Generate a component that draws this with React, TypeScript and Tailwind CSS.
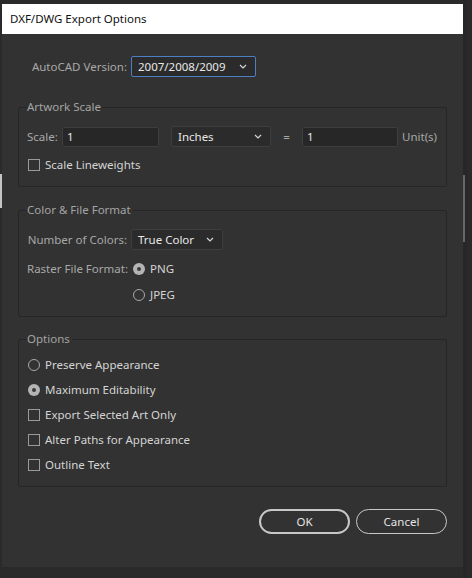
import { ReactNode } from "react";
import clsx from "clsx";

function Chevron() {
  return (
    <svg width="8" height="5" viewBox="0 0 8 5" className="shrink-0">
      <path d="M1 1l3 3 3-3" fill="none" stroke="#d6d6d6" strokeWidth="1.2" />
    </svg>
  );
}

function Select({ value, className, focused }: { value: string; className: string; focused?: boolean }) {
  return (
    <div
      className={clsx(
        "flex h-[21px] items-center justify-between rounded-[2px] border bg-[#2b2b2b] pl-[6px] pr-[8px] text-[#e8e8e8]",
        focused ? "border-[#4b80c4]" : "border-[#3e3e3e]",
        className
      )}
    >
      <span>{value}</span>
      <Chevron />
    </div>
  );
}

function TextInput({ value, className }: { value: string; className: string }) {
  return (
    <div className={clsx("flex h-[20px] items-center rounded-[2px] border border-[#3e3e3e] bg-[#272727] pl-[4px] text-[#e8e8e8]", className)}>
      {value}
    </div>
  );
}

function Checkbox({ label }: { label: string }) {
  return (
    <div className="flex h-[16px] items-center">
      <span className="ml-[1px] h-[12px] w-[12px] border border-[#9a9a9a]" />
      <span className="ml-[5px] text-[#d4d4d4]">{label}</span>
    </div>
  );
}

function Radio({ label, checked, className }: { label: string; checked?: boolean; className?: string }) {
  return (
    <div className={clsx("flex h-[16px] items-center", className)}>
      {checked ? (
        <span className="ml-[1px] flex h-[12px] w-[12px] items-center justify-center rounded-full bg-[#b4b4b4]">
          <span className="h-[4px] w-[4px] rounded-full bg-[#3a3a3a]" />
        </span>
      ) : (
        <span className="ml-[1px] h-[12px] w-[12px] rounded-full border border-[#a8a8a8]" />
      )}
      <span className="ml-[5px] text-[#d4d4d4]">{label}</span>
    </div>
  );
}

function Group({ title, className, children }: { title: string; className: string; children: ReactNode }) {
  return (
    <fieldset className={clsx("rounded-[2px] border border-[#262626] px-[8px] pb-[13px]", className)}>
      <legend className="pr-[2px] leading-[16px] text-[#a4a4a4]">{title}</legend>
      {children}
    </fieldset>
  );
}

export default function App() {
  return (
    <div className="relative h-[578px] w-[472px] overflow-hidden whitespace-nowrap bg-[#2a2a2a] font-['Noto_Sans','Liberation_Sans',sans-serif] text-[11.5px] leading-[16px]">
      <div className="ml-[2px] mt-[4px] flex h-[563px] w-[461px] flex-col bg-[#323232]">
        {/* Title */}
        <div className="flex h-[30px] items-center bg-white pl-[8px] text-[11.5px] text-[#111]">DXF/DWG Export Options</div>

        <div className="flex flex-col px-4">
          {/* Version */}
          <div className="mt-[22px] flex items-center">
            <span className="mr-[4px] w-[109px] text-right text-[#a8a8a8]">AutoCAD Version:</span>
            <Select value="2007/2008/2009" className="w-[125px]" focused />
          </div>

          {/* Artwork Scale */}
          <Group title="Artwork Scale" className="mt-[22px]">
            <div className="mt-[11px] flex items-center">
              <span className="w-[35px] text-[#a8a8a8]">Scale:</span>
              <TextInput value="1" className="w-[97px]" />
              <Select value="Inches" className="ml-[12px] h-[20px] w-[100px]" />
              <span className="w-[31px] text-center text-[#a8a8a8]">=</span>
              <TextInput value="1" className="w-[96px]" />
              <span className="ml-[4px] text-[#a8a8a8]">Unit(s)</span>
            </div>
            <div className="mt-[10px]">
              <Checkbox label="Scale Lineweights" />
            </div>
          </Group>

          {/* Color & File Format */}
          <Group title="Color & File Format" className="mt-[15px]">
            <div className="mt-[11px] flex items-center">
              <span className="mr-[4px] w-[100px] text-right text-[#a8a8a8]">Number of Colors:</span>
              <Select value="True Color" className="h-[20px] w-[92px]" />
            </div>
            <div className="mt-[11px] flex items-center">
              <span className="mr-[4px] w-[100px] text-right text-[#a8a8a8]">Raster File Format:</span>
              <Radio label="PNG" checked className="ml-[1px]" />
            </div>
            <div className="mt-[10px] flex items-center">
              <span className="mr-[4px] w-[100px]" />
              <Radio label="JPEG" className="ml-[1px]" />
            </div>
          </Group>

          {/* Options */}
          <Group title="Options" className="mt-[14px]">
            <div className="mt-[10px] flex flex-col gap-[9px]">
              <Radio label="Preserve Appearance" />
              <Radio label="Maximum Editability" checked />
              <Checkbox label="Export Selected Art Only" />
              <Checkbox label="Alter Paths for Appearance" />
              <Checkbox label="Outline Text" />
            </div>
          </Group>

          {/* Buttons */}
          <div className="mt-[22px] flex justify-end gap-[6px]">
            <button className="h-[25px] w-[91px] rounded-full border-2 border-[#c8c8c8] text-[#e4e4e4]">OK</button>
            <button className="h-[25px] w-[91px] rounded-full border border-[#c8c8c8] text-[#e4e4e4]">Cancel</button>
          </div>
        </div>
      </div>

      {/* window edge artifacts */}
      <div className="absolute left-0 top-[174px] h-[34px] w-[2px] bg-[#c4c4c4]" />
      <div className="absolute left-[463px] top-[175px] h-[67px] w-[2px] bg-[#c8c8c8]" />
      <div className="absolute left-[463px] top-0 h-[578px] w-[4px] bg-[#262626] opacity-60" />
    </div>
  );
}
